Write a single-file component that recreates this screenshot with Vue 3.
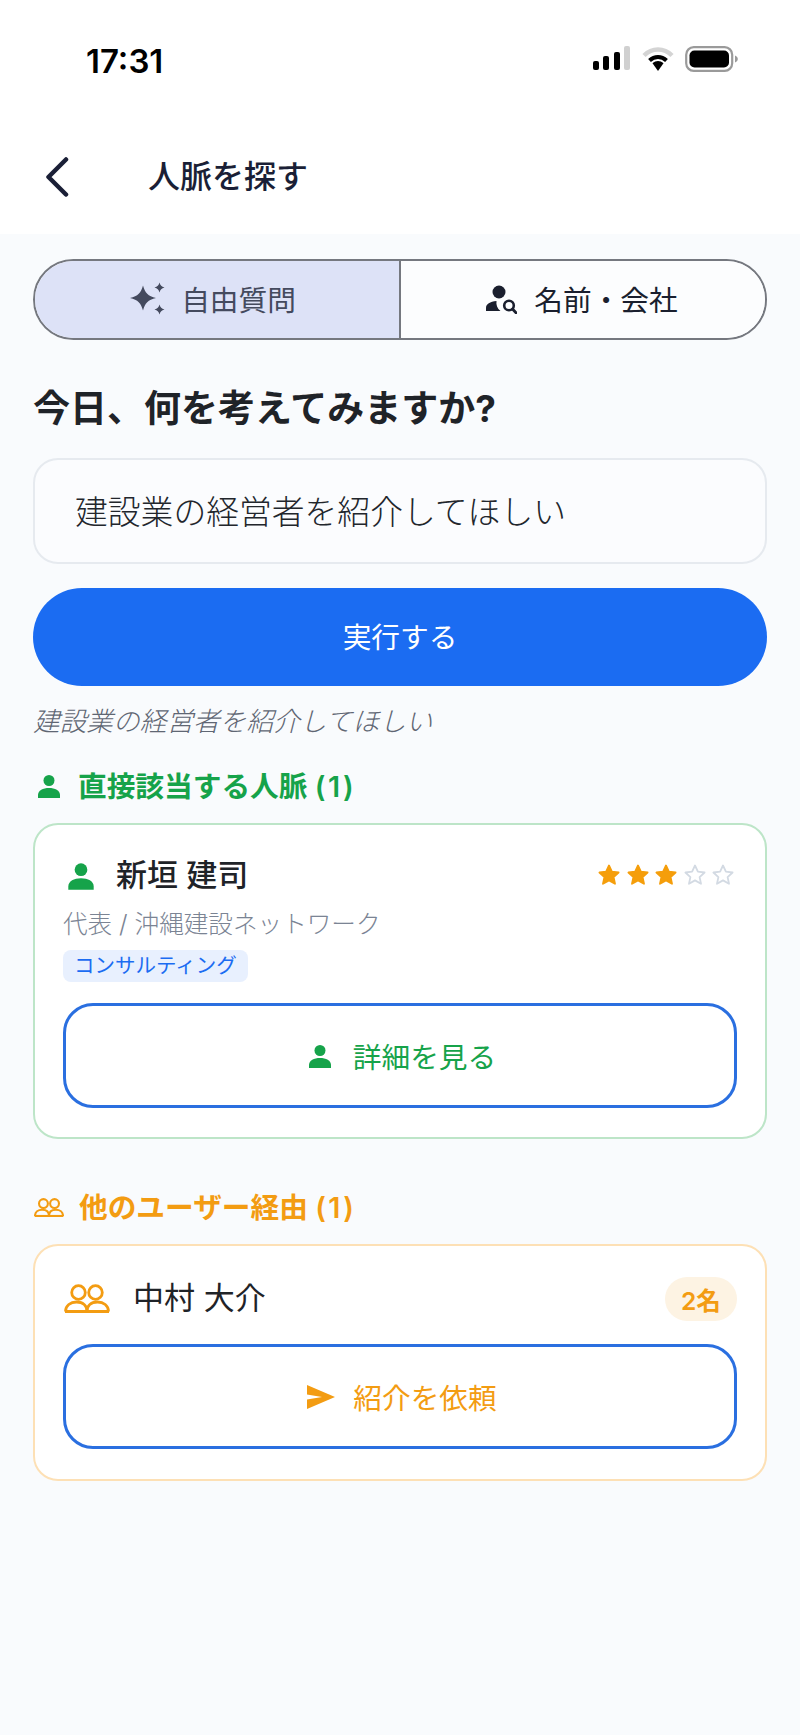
<template>
  <div class="page">
    <header class="top">
      <div class="status">
        <span class="time">17:31</span>
        <div class="status-icons">
          <svg width="38" height="24" viewBox="0 0 38 24">
            <rect x="0" y="15" width="6" height="9" rx="2" fill="#000" />
            <rect x="10" y="10" width="6" height="14" rx="2" fill="#000" />
            <rect x="21" y="6" width="6" height="18" rx="2" fill="#000" />
            <rect x="31" y="0" width="6" height="24" rx="2" fill="#d0d0d0" />
          </svg>
          <svg width="32" height="26" viewBox="0 0 32 26">
            <path d="M2 9.500C10 1.500 22 1.500 30 9.500" fill="none" stroke="#d4d4d4" stroke-width="4.500" />
            <path d="M7.500 14.500C12.500 9.800 19.500 9.800 24.500 14.500" fill="none" stroke="#000" stroke-width="4" />
            <path d="M10.500 17.200C14 14.200 18 14.200 21.500 17.200L16 25z" fill="#000" />
          </svg>
          <svg width="53" height="26" viewBox="0 0 53 26">
            <rect x="1.200" y="1.200" width="46" height="23.600" rx="7.500" fill="none" stroke="#9a9a9a" stroke-width="2.200" />
            <rect x="4.500" y="4.500" width="39.500" height="17" rx="5" fill="#000" />
            <path d="M50 9.500c2 .8 2.800 2 2.800 3.500s-.8 2.700-2.800 3.500z" fill="#9a9a9a" />
          </svg>
        </div>
      </div>
      <div class="nav">
        <svg class="back" width="26" height="40" viewBox="0 0 26 40">
          <path d="M22 2.500 4.500 20 22 37.500" fill="none" stroke="#1a1f36" stroke-width="4.500" stroke-linecap="round" stroke-linejoin="round" />
        </svg>
        <span class="nav-title">人脈を探す</span>
      </div>
    </header>

    <main class="content">
      <div class="segment">
        <button class="seg seg-on">
          <svg width="36" height="34" viewBox="0 0 36 34">
            <path d="M13 3.500c2 7.500 5 10.500 13 12.500-8 2-11 5-13 12.500-2-7.500-5-10.500-13-12.500 8-2 11-5 13-12.500z" fill="#444a5e" />
            <path d="M29.500 .5c.9 3 2 4.100 5 5-3 .9-4.100 2-5 5-.9-3-2-4.100-5-5 3-.9 4.100-2 5-5z" fill="#444a5e" />
            <path d="M29.500 22.500c.9 3 2 4.100 5 5-3 .9-4.100 2-5 5-.9-3-2-4.100-5-5 3-.9 4.100-2 5-5z" fill="#444a5e" />
          </svg>
          <span>自由質問</span>
        </button>
        <button class="seg seg-off">
          <svg width="31" height="30" viewBox="0 0 31 30">
            <circle cx="13" cy="8" r="6.500" fill="#1a1f2e" />
            <path d="M0 27v-3c0-4 4-6.500 10.500-7-.6 3.800.8 7.500 4 10z" fill="#1a1f2e" />
            <circle cx="23" cy="21.500" r="4.800" fill="none" stroke="#1a1f2e" stroke-width="2.600" />
            <path d="m26.500 25 3.500 3.800" stroke="#1a1f2e" stroke-width="2.800" stroke-linecap="round" />
          </svg>
          <span>名前・会社</span>
        </button>
      </div>

      <h1 class="question">今日、何を考えてみますか?</h1>
      <div class="input">建設業の経営者を紹介してほしい</div>
      <button class="run">実行する</button>
      <p class="echo">建設業の経営者を紹介してほしい</p>

      <h2 class="sec green sec-first">
        <svg class="sec-icon" width="26" height="26" viewBox="0 0 26 26">
          <circle cx="13" cy="7.500" r="5.500" fill="currentColor" />
          <path d="M2 25v-3c0-4.500 5-7 11-7s11 2.500 11 7v3z" fill="currentColor" />
        </svg>
        <span>直接該当する人脈 <span class="num">({{ direct.length }})</span></span>
      </h2>
      <div v-for="p in direct" :key="p.name" class="card card-green">
        <div class="row">
          <svg class="row-icon" width="30" height="30" viewBox="0 0 26 26">
            <circle cx="13" cy="7.500" r="5.500" fill="#16a34a" />
            <path d="M2 25v-3c0-4.500 5-7 11-7s11 2.500 11 7v3z" fill="#16a34a" />
          </svg>
          <span class="name medium">{{ p.name }}</span>
          <div class="stars">
            <svg v-for="n in 5" :key="n" width="24" height="24" viewBox="0 0 24 24">
              <path
                d="M12 2.500l2.900 6.200 6.700.8-5 4.600 1.400 6.700-6-3.400-6 3.400 1.400-6.700-5-4.600 6.700-.8z"
                :fill="n <= p.stars ? '#f59e0b' : 'none'"
                :stroke="n <= p.stars ? '#f59e0b' : '#d3dae3'"
                stroke-width="1.800"
                stroke-linejoin="round"
              />
            </svg>
          </div>
        </div>
        <div class="role">{{ p.role }}</div>
        <span class="chip">{{ p.tag }}</span>
        <button class="outline green">
          <svg width="26" height="26" viewBox="0 0 26 26">
            <circle cx="13" cy="7.500" r="5.500" fill="currentColor" />
            <path d="M2 25v-3c0-4.500 5-7 11-7s11 2.500 11 7v3z" fill="currentColor" />
          </svg>
          <span>詳細を見る</span>
        </button>
      </div>

      <h2 class="sec orange sec-second">
        <svg class="sec-icon" width="30" height="19" viewBox="0 0 46 29">
          <g fill="none" stroke="currentColor" stroke-width="3.200">
            <circle cx="14.500" cy="8.500" r="6.800" />
            <circle cx="31.500" cy="8.500" r="6.800" />
            <path d="M1.500 27.500c0-6 5-9.500 11-9.500 7 0 10.500 4 10.500 9.500" />
            <path d="M23 27.500c0-5.500 3.500-9.500 10.500-9.500 6 0 11 3.500 11 9.500" />
            <path d="M1 27.500h44" />
          </g>
        </svg>
        <span>他のユーザー経由 <span class="num">({{ viaOthers.length }})</span></span>
      </h2>
      <div v-for="p in viaOthers" :key="p.name" class="card card-orange">
        <div class="row">
          <svg class="row-icon-wide" width="46" height="29" viewBox="0 0 46 29">
            <g fill="none" stroke="#f39c12" stroke-width="2.800">
              <circle cx="14.500" cy="8.500" r="6.800" />
              <circle cx="31.500" cy="8.500" r="6.800" />
              <path d="M1.500 27.500c0-6 5-9.500 11-9.500 7 0 10.500 4 10.500 9.500" />
              <path d="M23 27.500c0-5.500 3.500-9.500 10.500-9.500 6 0 11 3.500 11 9.500" />
              <path d="M1 27.500h44" />
            </g>
          </svg>
          <span class="name">{{ p.name }}</span>
          <span class="count">{{ p.count }}</span>
        </div>
        <button class="outline orange outline-second">
          <svg width="28" height="24" viewBox="0 0 28 24">
            <path d="M0 0 28 12 0 24V14.500L15 12 0 9.500z" fill="currentColor" />
          </svg>
          <span>紹介を依頼</span>
        </button>
      </div>
    </main>
  </div>
</template>

<script setup>
const direct = [
  { name: "新垣 建司", role: "代表 / 沖縄建設ネットワーク", tag: "コンサルティング", stars: 3 },
];
const viaOthers = [{ name: "中村 大介", count: "2名" }];
</script>

<style>
body {
  margin: 0;
  background: #f9fbfd;
}
</style>

<style scoped>
.page {
  width: 800px;
  min-height: 1735px;
  background: #f9fbfd;
  font-family: Inter, "Noto Sans CJK JP", sans-serif;
  color: #1f2328;
}

.top {
  height: 234px;
  background: #fff;
}

.status {
  height: 120px;
  display: flex;
  justify-content: space-between;
  padding: 46px 62px 0 86px;
  box-sizing: border-box;
}

.time {
  font-size: 33px;
  font-weight: 600;
  line-height: 30px;
  color: #000;
}

.status-icons {
  display: flex;
  align-items: flex-start;
  gap: 11px;
}

.nav {
  display: flex;
  align-items: center;
  height: 114px;
}

.back {
  margin-left: 44px;
  margin-right: 78px;
}

.nav-title {
  font-size: 32px;
  font-weight: 500;
  color: #1a1f36;
  line-height: 40px;
}

.content {
  padding: 25px 33px 0;
}

.segment {
  display: flex;
  height: 81px;
  border: 2px solid #75787f;
  border-radius: 41px;
  overflow: hidden;
  box-sizing: border-box;
}

.seg {
  flex: 1 1 0;
  min-width: 0;
  box-sizing: border-box;
  display: flex;
  align-items: center;
  justify-content: center;
  gap: 15px;
  border: 0;
  padding: 0 0 2px;
  background: #fcfdfe;
  font: inherit;
  font-size: 28.700px;
  font-weight: 400;
  color: #1a1f2e;
}

.seg-on {
  flex: 0 0 calc(50% + 1px);
  background: #dde2f7;
  color: #444a5e;
  padding-right: 8px;
  border-right: 2px solid #75787f;
}

.seg-off {
  padding-right: 2px;
  gap: 17px;
}

.question {
  margin: 44px 0 0;
  font-size: 37px;
  line-height: 50px;
  font-weight: 700;
  color: #1f2328;
}

.input {
  margin-top: 24px;
  height: 106px;
  box-sizing: border-box;
  padding: 0 40px 4px;
  display: flex;
  align-items: center;
  border: 2px solid #e6eaef;
  border-radius: 25px;
  background: #fbfcfe;
  font-size: 32.800px;
  font-weight: 300;
  color: #22262c;
}

.run {
  display: block;
  width: 100%;
  height: 98px;
  margin-top: 24px;
  padding: 0 0 4px;
  border: 0;
  border-radius: 49px;
  background: #1b6cf2;
  color: #fff;
  font: inherit;
  font-size: 28.700px;
  font-weight: 400;
}

.echo {
  margin: 15px 0 0;
  font-size: 26.700px;
  font-weight: 300;
  line-height: 40px;
  font-style: italic;
  color: #5f6673;
}

.sec {
  display: flex;
  align-items: center;
  margin: 0;
  font-size: 28.700px;
  line-height: 40px;
  font-weight: 600;
}

.num {
  letter-spacing: 2.500px;
}

.sec-first {
  margin-top: 26px;
}

.sec-second {
  margin-top: 49px;
}

.sec-icon {
  margin-left: 3px;
  margin-right: 16px;
  margin-bottom: 2px;
}

.sec-second .sec-icon {
  margin-left: 1px;
  margin-right: 15px;
}

.green {
  color: #16a34a;
}

.orange {
  color: #f39c12;
}

.card {
  margin-top: 16px;
  padding: 29px 28px 28px;
  border-radius: 25px;
  border: 2px solid;
  background: #fff;
  box-sizing: border-box;
}

.card-green {
  border-color: #bde5c8;
  height: 316px;
}

.card-orange {
  border-color: #fde0b5;
  height: 237px;
  padding-top: 31px;
}

.row {
  display: flex;
  align-items: center;
  height: 44px;
}

.row-icon {
  margin-left: 3px;
  margin-right: 20px;
}

.row-icon-wide {
  margin-left: 1px;
  margin-right: 23px;
  margin-bottom: 2px;
}

.name {
  font-size: 31px;
  font-weight: 400;
  color: #1f2328;
  margin-bottom: 8px;
}

.medium {
  font-weight: 500;
}

.stars {
  margin-left: auto;
  margin-right: 2px;
  margin-bottom: 2px;
  display: flex;
  gap: 4.500px;
}

.count {
  margin-left: auto;
  height: 44px;
  width: 72px;
  display: flex;
  align-items: center;
  justify-content: center;
  border-radius: 22px;
  background: #fdf3e3;
  color: #f39c12;
  font-size: 24.600px;
  font-weight: 600;
}

.role {
  margin-top: 8px;
  font-size: 24.600px;
  font-weight: 300;
  line-height: 36px;
  color: #7b8494;
}

.chip {
  display: inline-block;
  margin-top: 8px;
  height: 32px;
  line-height: 32px;
  padding: 0 11px;
  border-radius: 8px;
  background: #e8f0fe;
  color: #1b6cf2;
  font-size: 20.500px;
  vertical-align: top;
}

.outline {
  display: flex;
  align-items: center;
  justify-content: center;
  gap: 20px;
  width: 100%;
  height: 105px;
  margin-top: 21px;
  padding: 0 0 0 3px;
  border: 3px solid #2a6fe0;
  border-radius: 30px;
  background: #fff;
  font: inherit;
  font-size: 28.700px;
  font-weight: 400;
}

.outline.green {
  color: #16a34a;
}

.outline.orange {
  color: #f39c12;
}

.outline-second {
  margin-top: 23px;
  gap: 18px;
  padding-left: 4px;
}
</style>
